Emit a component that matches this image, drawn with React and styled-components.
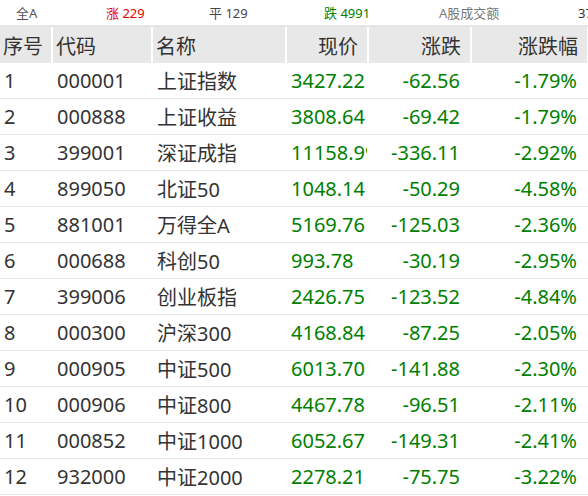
import styled, { createGlobalStyle } from "styled-components"

const GlobalStyle = createGlobalStyle`
  body {
    margin: 0;
    background: #ffffff;
    font-family: "Noto Sans", "Noto Sans CJK SC", sans-serif;
    color: #333333;
  }
`

const stats = [
  { label: "全A", width: 90, pad: 16, color: "#555555" },
  { label: "涨 229", width: 103, pad: 0, color: "#e60000" },
  { label: "平 129", width: 115, pad: 0, color: "#444444" },
  { label: "跌 4991", width: 115, pad: 0, color: "#008000" },
  { label: "A股成交额", width: 139, pad: 0, color: "#777777" },
  { label: "37", width: 40, pad: 0, color: "#333333" },
]

const columns = [
  { title: "序号", width: 53, align: "left" },
  { title: "代码", width: 100, align: "left" },
  { title: "名称", width: 134, align: "left" },
  { title: "现价", width: 82, align: "right", body: "left", green: true },
  { title: "涨跌", width: 103, align: "right", green: true },
  { title: "涨跌幅", width: 117, align: "right", green: true },
]

const rows = [
  ["1", "000001", "上证指数", "3427.22", "-62.56", "-1.79%"],
  ["2", "000888", "上证收益", "3808.64", "-69.42", "-1.79%"],
  ["3", "399001", "深证成指", "11158.99", "-336.11", "-2.92%"],
  ["4", "899050", "北证50", "1048.14", "-50.29", "-4.58%"],
  ["5", "881001", "万得全A", "5169.76", "-125.03", "-2.36%"],
  ["6", "000688", "科创50", "993.78", "-30.19", "-2.95%"],
  ["7", "399006", "创业板指", "2426.75", "-123.52", "-4.84%"],
  ["8", "000300", "沪深300", "4168.84", "-87.25", "-2.05%"],
  ["9", "000905", "中证500", "6013.70", "-141.88", "-2.30%"],
  ["10", "000906", "中证800", "4467.78", "-96.51", "-2.11%"],
  ["11", "000852", "中证1000", "6052.67", "-149.31", "-2.41%"],
  ["12", "932000", "中证2000", "2278.21", "-75.75", "-3.22%"],
]

const gridTemplate = columns.map((c) => `${c.width}px`).join(" ")

export default function App() {
  return (
    <Page>
      <GlobalStyle />
      <StatBar>
        {stats.map((s) => (
          <Stat key={s.label} $width={s.width} $pad={s.pad} $color={s.color}>
            {s.label}
          </Stat>
        ))}
      </StatBar>
      <HeaderRow>
        {columns.map((c) => (
          <HeaderCell key={c.title} $align={c.align}>
            {c.title}
          </HeaderCell>
        ))}
      </HeaderRow>
      {rows.map((r) => (
        <Row key={r[0]}>
          {r.map((v, i) => (
            <Cell
              key={i}
              $align={columns[i].body || columns[i].align}
              $green={columns[i].green}
            >
              {v}
            </Cell>
          ))}
        </Row>
      ))}
    </Page>
  )
}

const Page = styled.div`
  width: 588px;
  height: 496px;
  overflow: hidden;
  background: #ffffff;
`

const StatBar = styled.div`
  display: flex;
  align-items: center;
  height: 25px;
  border-bottom: 2px solid #e4e4e4;
  font-size: 13px;
  white-space: nowrap;
`

const Stat = styled.div`
  flex: none;
  width: ${(p) => p.$width}px;
  padding-left: ${(p) => p.$pad}px;
  color: ${(p) => p.$color};
`

const HeaderRow = styled.div`
  display: grid;
  grid-template-columns: ${gridTemplate};
  height: 36px;
  background: #e8e8e8;
  font-size: 20px;
`

const HeaderCell = styled.div`
  display: flex;
  align-items: center;
  justify-content: ${(p) => (p.$align === "right" ? "flex-end" : "flex-start")};
  padding: 0 ${(p) => (p.$align === "right" ? "9px" : "0")} 0
    ${(p) => (p.$align === "right" ? "0" : "3px")};
  border-right: 2px solid #ffffff;
  color: #333333;
  white-space: nowrap;
`

const Row = styled.div`
  display: grid;
  grid-template-columns: ${gridTemplate};
  height: 35px;
  border-bottom: 1px solid #e6e6e6;
  font-size: 20px;
`

const Cell = styled.div`
  display: flex;
  align-items: center;
  justify-content: ${(p) => (p.$align === "right" ? "flex-end" : "flex-start")};
  padding: 0 ${(p) => (p.$align === "right" ? "10px" : "0")} 0
    ${(p) => (p.$align === "right" ? "0" : "4px")};
  color: ${(p) => (p.$green ? "#008000" : "#333333")};
  white-space: nowrap;
  overflow: hidden;
  margin-right: 2px;
`
